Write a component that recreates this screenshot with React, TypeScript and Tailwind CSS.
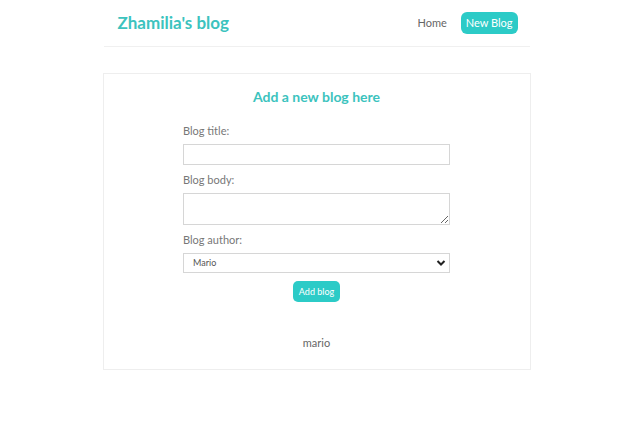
import { useState } from "react"

export default function App() {
  const [title, setTitle] = useState("")
  const [body, setBody] = useState("")
  const [author, setAuthor] = useState("mario")

  return (
    <div className="min-h-[423px] bg-white font-['Lato',sans-serif] text-[#333]">
      <div className="mx-auto w-[428px]">
        {/* Navbar */}
        <nav className="mx-[1px] flex h-[47px] items-center border-b border-[#f0f0f0] pl-[14px] pr-[12px]">
          <h1 className="text-[17px] leading-[20px] font-bold text-[#3cc3be]">Zhamilia's blog</h1>
          <div className="ml-auto flex items-center">
            <a href="#" className="mr-[14px] text-[11px] text-[#666]">Home</a>
            <a
              href="#"
              className="flex h-[22px] items-center rounded-[6px] bg-[#2ccbc7] px-[5px] text-[11px] text-white"
            >
              New Blog
            </a>
          </div>
        </nav>

        {/* Create card */}
        <div className="mt-[26px] flex h-[297px] flex-col items-center border border-[#eeeeee] pt-[13px]">
          <h2 className="text-[14px] leading-[20px] font-bold text-[#3cc3be]">Add a new blog here</h2>
          <form className="mt-[17px] flex w-[267px] flex-col" onSubmit={(e) => e.preventDefault()}>
            <label className="text-[11px] leading-[13px] text-[#777]">Blog title:</label>
            <input
              type="text"
              value={title}
              onChange={(e) => setTitle(e.target.value)}
              className="mt-[7px] h-[21px] border border-[#d6d6d6] px-2 text-[11px] outline-none"
            />
            <label className="mt-[8px] text-[11px] leading-[13px] text-[#777]">Blog body:</label>
            <textarea
              value={body}
              onChange={(e) => setBody(e.target.value)}
              className="mt-[7px] h-[32px] border border-[#d6d6d6] px-2 text-[11px] outline-none"
            />
            <label className="mt-[8px] text-[11px] leading-[13px] text-[#777]">Blog author:</label>
            <div className="relative mt-[7px]">
              <select
                value={author}
                onChange={(e) => setAuthor(e.target.value)}
                className="block h-[20px] w-full appearance-none border border-[#d6d6d6] bg-white pl-[9px] text-[9px] text-[#555] outline-none"
              >
                <option value="mario">Mario</option>
                <option value="yoshi">Yoshi</option>
              </select>
              <svg
                className="pointer-events-none absolute right-[4px] top-[6px]"
                width="10"
                height="8"
                viewBox="0 0 10 8"
              >
                <path d="M1.5 2 L5 5.5 L8.5 2" fill="none" stroke="#222" strokeWidth="2" />
              </svg>
            </div>
            <button
              type="submit"
              className="mx-auto mt-[8px] h-[21px] rounded-[5px] bg-[#2ccbc7] px-[6px] text-[9px] text-white"
            >
              Add blog
            </button>
          </form>
          <p className="mt-[34px] text-[11px] leading-[14px] text-[#666]">{author}</p>
        </div>
      </div>
    </div>
  )
}
